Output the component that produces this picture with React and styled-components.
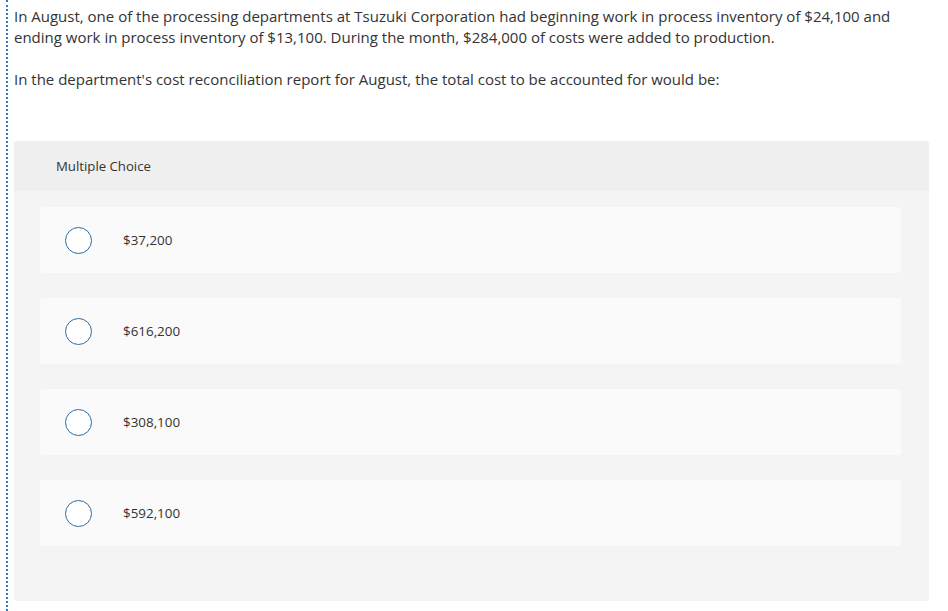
import React from "react";
import styled, { createGlobalStyle } from "styled-components";

const Global = createGlobalStyle`
  html, body { margin: 0; padding: 0; background: #fff; }
  body { font-family: "Open Sans", "Lato", sans-serif; color: #333; }
`;

const Page = styled.div`
  min-height: 100vh;
  box-sizing: border-box;
  margin-left: 6px;
  border-left: 2px dotted #3a78c0;
  padding: 6px 19px 0 6px;
`;

const Question = styled.p`
  margin: 0 0 ${(p) => p.$gap || 0}px 0;
  font-size: 15px;
  line-height: 21px;
  color: #333;
`;

const Panel = styled.div`
  margin-top: 51px;
  background: #f4f4f4;
  border-radius: 3px;
  overflow: hidden;
`;

const Header = styled.div`
  height: 50px;
  background: #efefef;
  display: flex;
  align-items: center;
  padding-left: 42px;
  font-size: 13.2px;
  color: #333;
`;

const Options = styled.div`
  display: flex;
  flex-direction: column;
  gap: 25px;
  padding: 16px 28px 55px 26px;
`;

const Card = styled.div`
  height: 66px;
  background: #fafafa;
  border-radius: 3px;
  display: flex;
  align-items: center;
  padding-left: 25px;
`;

const Radio = styled.span`
  width: 27px;
  height: 27px;
  box-sizing: border-box;
  border-radius: 50%;
  border: 1.5px solid #2f6aa3;
  background: #fff;
  flex: none;
`;

const Label = styled.span`
  margin-left: 31px;
  font-size: 13.4px;
  color: #333;
`;

const choices = ["$37,200", "$616,200", "$308,100", "$592,100"];

export default function App() {
  return (
    <>
      <Global />
      <Page>
        <Question $gap={21}>
          In August, one of the processing departments at Tsuzuki Corporation had beginning work in process inventory of $24,100 and ending work in process inventory of $13,100. During the month, $284,000 of costs were added to production.
        </Question>
        <Question>
          In the department's cost reconciliation report for August, the total cost to be accounted for would be:
        </Question>
        <Panel>
          <Header>Multiple Choice</Header>
          <Options>
            {choices.map((c) => (
              <Card key={c}>
                <Radio />
                <Label>{c}</Label>
              </Card>
            ))}
          </Options>
        </Panel>
      </Page>
    </>
  );
}
